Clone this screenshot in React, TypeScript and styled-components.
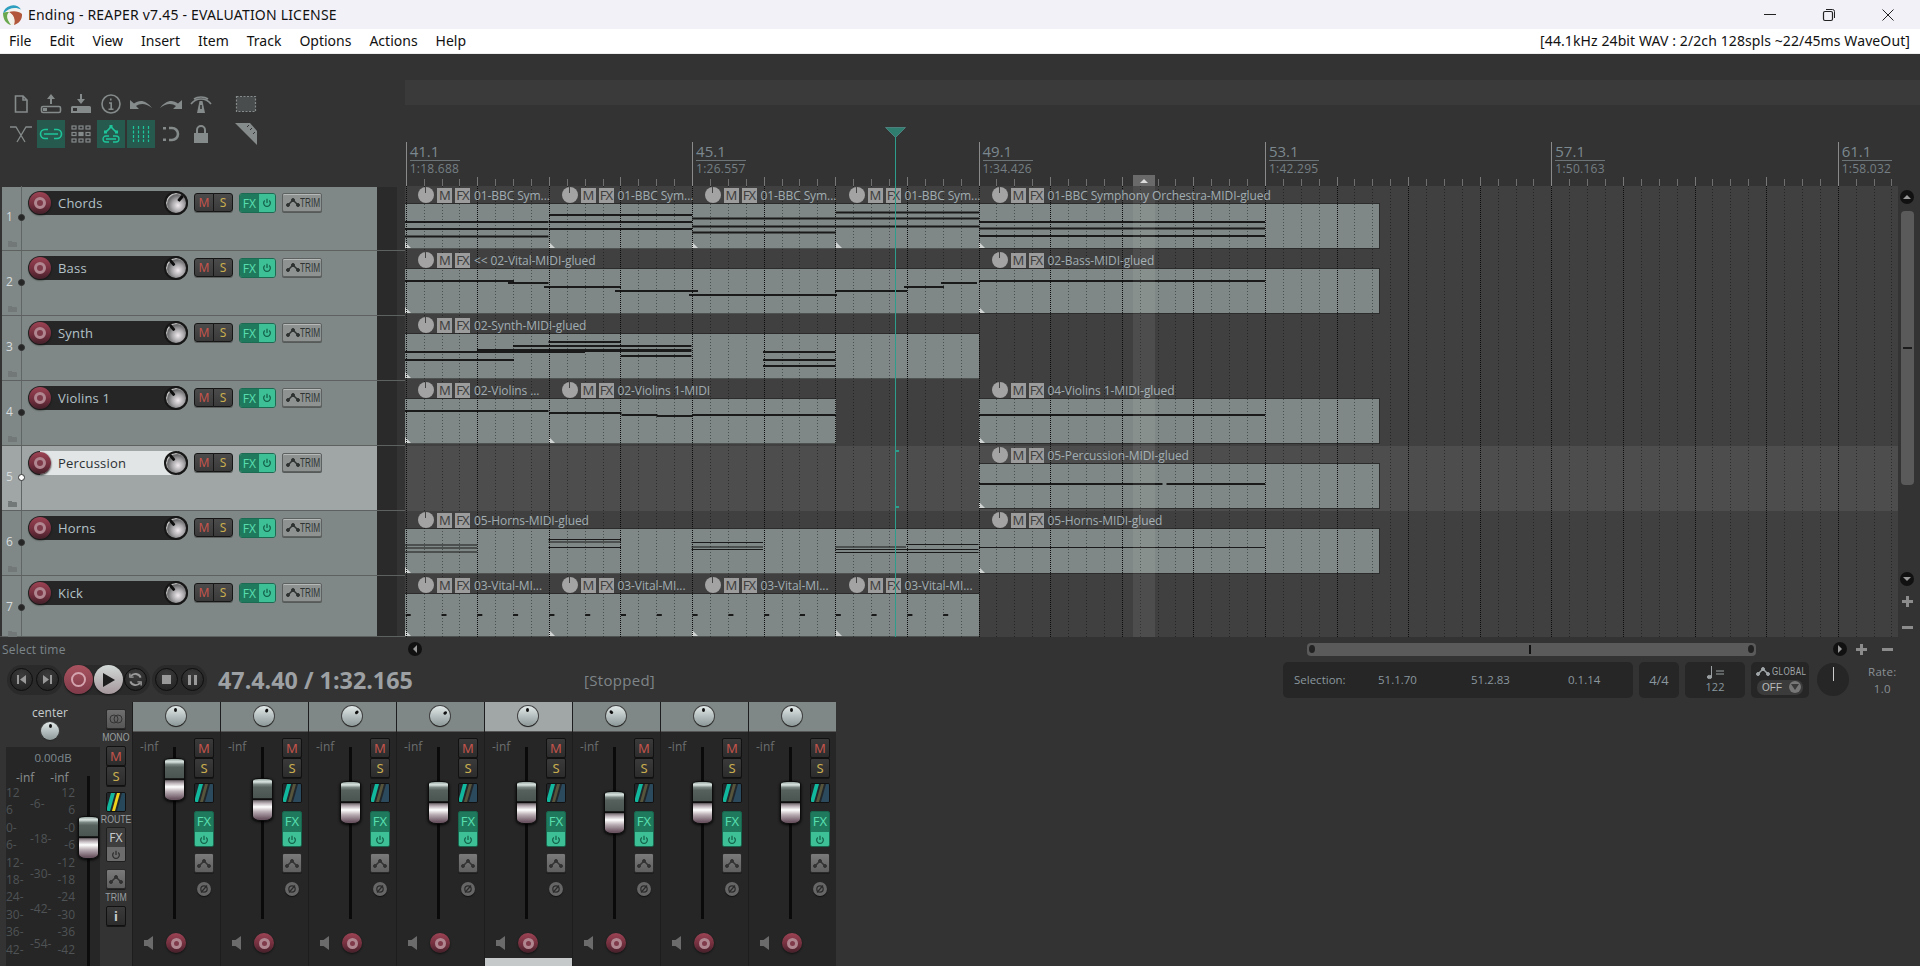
import React from 'react';
import styled, { createGlobalStyle } from 'styled-components';

const UI = `"Open Sans", "Noto Sans", "Liberation Sans", sans-serif`;
const Global = createGlobalStyle`
  html, body { margin: 0; padding: 0; background: #333; overflow: hidden; }
  * { box-sizing: border-box; }
`;

const Page = styled.div`
  width: 1920px; height: 966px; display: flex; flex-direction: column;
  background: #333; overflow: hidden; font-family: ${UI}; color: #9aa;
`;

/* ---------- window chrome ---------- */
const TitleBar = styled.div`
  height: 29px; flex: none; background: #f3f1f8; display: flex; align-items: center;
  padding-left: 2px; color: #111; font: 14px "Noto Sans", sans-serif;
`;
const TitleText = styled.span`margin-left: 5px; flex: 1; letter-spacing: 0.19px;`;
const WinBtn = styled.svg`width: 14px; height: 14px; margin-right: 45px; fill: none; stroke: #222; stroke-width: 1;
  &:last-child { margin-right: 25px; }`;
const MenuBar = styled.div`
  height: 25px; flex: none; background: #fff; border-bottom: 1px solid #eee; display: flex; align-items: center;
  padding: 0 10px 2px 9px; color: #111; font: 14px "Noto Sans", sans-serif; gap: 18px;
`;
const MenuInfo = styled.span`margin-left: auto; letter-spacing: 0.1px;`;

/* ---------- upper area ---------- */
const Upper = styled.div`height: 583px; flex: none; display: flex;`;
const LeftCol = styled.div`width: 405px; flex: none; display: flex; flex-direction: column;`;
const RightCol = styled.div`flex: 1; display: flex; flex-direction: column; min-width: 0;`;
const ToolArea = styled.div`
  height: 132px; flex: none; padding: 36px 0 0 7px; display: grid;
  grid-template-columns: repeat(7, 28px) 28px; grid-auto-rows: 28px; column-gap: 2px; row-gap: 2px;
`;
const ToolCell = styled.div<{ $on?: boolean; $far?: boolean }>`
  width: 28px; height: 28px; display: flex; align-items: center; justify-content: center;
  background: ${p => (p.$on ? '#265a4e' : 'transparent')};
  margin-left: ${p => (p.$far ? '15px' : '0')};
  color: ${p => (p.$on ? '#1fc59a' : '#858a8a')};
`;
const TI = styled.svg`width: 24px; height: 24px; fill: none; stroke: currentColor; stroke-width: 1.6;`;

const TrackList = styled.div`display: flex; flex-direction: column; flex: 1; min-height: 0; border-bottom: 1px solid #555;`;
const TrackRow = styled.div<{ $h: number; $sel?: boolean }>`
  height: ${p => p.$h}px; flex: none; display: flex; margin-left: 2px;
  background: linear-gradient(to right, ${p => (p.$sel ? '#9fa6a5' : '#7f8886')} 375px, #2a2a2a 375px, #2a2a2a 395px, #333 395px);
  border-bottom: 1px solid #5d6261;
  &:first-child { border-top: 1px solid #333; }
  &:first-child > * { margin-top: -1px; }
`;
const NumCol = styled.div`
  width: 20px; flex: none; position: relative; border-right: 1px solid #5f6665;
  padding: 23px 0 0 4px; font-size: 12px; line-height: 16px; color: #d8dcdc;
`;
const Dot = styled.i<{ $sel?: boolean }>`
  position: absolute; right: -4px; top: 28px; width: 7px; height: 7px; border-radius: 50%;
  background: ${p => (p.$sel ? '#fff' : '#262626')}; border: 1px solid #333;
`;
const Folder = styled.i`
  position: absolute; left: 6px; top: 56px; width: 9px; height: 5px; background: #717877; border-radius: 1px 1px 0 0;
  &::before { content: ''; position: absolute; left: 0; top: -1px; width: 4px; height: 1px; background: #717877; }
`;
const TrackCtl = styled.div`display: flex; align-items: flex-start; padding: 5px 0 0 6px; gap: 6px;`;
const NamePill = styled.div<{ $sel?: boolean }>`
  width: 160px; height: 24px; border-radius: 12px; display: flex; align-items: center; position: relative;
  background: ${p => (p.$sel ? 'linear-gradient(to right,#262626 12px,#e2e5e5 12px,#e2e5e5 150px,#262626 150px)' : '#262626')};
  color: ${p => (p.$sel ? '#2a2f33' : '#b4c2c8')}; font-size: 13px;
`;
const PillName = styled.span`margin-left: 30px; letter-spacing: 0.2px; position: relative; z-index: 1;`;
const RecOuter = styled.div<{ $d: number }>`
  width: ${p => p.$d}px; height: ${p => p.$d}px; border-radius: 50%; flex: none;
  background: linear-gradient(#9c4354, #6b2c3a 65%, #43202a);
  display: flex; align-items: center; justify-content: center; box-shadow: 0 1px 2px #111;
`;
const RecInner = styled.div<{ $d: number }>`
  width: ${p => p.$d}px; height: ${p => p.$d}px; border-radius: 50%; border: 3px solid #b08790; background: #7f3b4a;
`;
const TcpRec = styled.div`position: absolute; left: 1px; top: 1px;`;
const TcpKnob = styled.div`
  position: absolute; right: 0; top: 0; width: 24px; height: 24px; border-radius: 50%; border: 2px solid #171717;
  background: radial-gradient(circle at 60% 62%, #efeaed 0, #aaa8ab 34%, #636365 62%, #333 82%);
  box-shadow: inset 1px 1px 1px #cfcfcf;
`;
const KnobArm = styled.div`position: absolute; inset: 0;`;
const KnobTick = styled.i`display: block; width: 3px; height: 7px; background: #0e0e0e; margin: 0 auto; border-radius: 1px;`;
const MSGroup = styled.div`display: flex; margin-top: 2px;`;
const TcpMS = styled.div<{ $c: string }>`
  width: 20px; height: 19px; border: 1px solid #161616; background: linear-gradient(#4b4b4b, #3a3a3a);
  display: flex; align-items: center; justify-content: center; color: ${p => p.$c}; font: 12px "Noto Sans", sans-serif;
  box-shadow: 0 1px 0 #5a5f5e;
  &:first-child { border-radius: 3px 0 0 3px; } &:last-child { border-radius: 0 3px 3px 0; margin-left: -1px; }
`;
const FxGroup = styled.div`display: flex; margin-top: 2px; border-radius: 3px; overflow: hidden; border: 1px solid #1b6b52;`;
const FxL = styled.div`width: 19px; height: 18px; background: #1f7a5d; color: #57dcae; font: 12px "Noto Sans", sans-serif;
  display: flex; align-items: center; justify-content: center;`;
const FxR = styled.div`width: 16px; height: 18px; background: #3dc095; color: #14604a; display: flex; align-items: center; justify-content: center;`;
const TrimBtn = styled.div`
  width: 40px; height: 19px; margin-top: 2px; border: 1px solid #5d6261; border-radius: 2px; background: #8e9392;
  display: flex; align-items: center; padding-left: 3px; color: #2f3433; box-shadow: 0 1px 0 #565b5a, inset 0 1px 0 #b5b9b8;
`;
const TrimTxt = styled.span`display: inline-block; font: 12.5px "Liberation Sans", sans-serif; transform: scaleX(0.66); transform-origin: left; margin-left: 0;`;

/* ---------- ruler ---------- */
const RulerArea = styled.div`height: 132px; flex: none; position: relative;`;
const TopStrip = styled.div`position: absolute; left: 0; right: 0; top: 26px; height: 25px; background: #3a3a3a;`;
const RulerMark = styled.div`position: absolute; top: 89px; width: 58px; color: #7c888f;`;
const Bar = styled.div`font-size: 15px; line-height: 17px; border-bottom: 1px solid #6c7478; width: 50px; height: 18px;`;
const Secs = styled.div`font-size: 12px; line-height: 15px; color: #757f84; letter-spacing: 0.25px;`;
const SelTab = styled.div`position: absolute; left: 728px; top: 121px; width: 22px; height: 11px; background: #6a6a6a;
  display: flex; justify-content: center; align-items: center; &::after { content: ''; border: 4px solid transparent; border-bottom-color: #ddd; border-top: 0; }`;
const RulerTicks = styled.svg`position: absolute; left: 0; top: 0; width: 1515px; height: 132px;`;

/* ---------- arrange ---------- */
const ArrangeWrap = styled.div`flex: 1; display: flex; min-height: 0;`;
const Canvas = styled.div`width: 1493px; flex: none; position: relative; display: flex; flex-direction: column; overflow: hidden;`;
const LaneRow = styled.div<{ $h: number; $sel?: boolean }>`
  height: ${p => p.$h}px; flex: none; position: relative; background: ${p => (p.$sel ? '#4d4d4d' : '#404040')};
`;
const Clip = styled.div`position: absolute; top: 1px;`;
const ClipHead = styled.div`height: 16px; position: relative; display: flex; align-items: center; padding-left: 13px; z-index: 3; white-space: nowrap;`;
const ClipVol = styled.i`width: 16px; height: 16px; border-radius: 50%; background: #a3a3a3; position: relative; flex: none;
  &::after { content: ''; position: absolute; left: 7px; top: 0; width: 1px; height: 6px; background: #444; }`;
const ClipBox = styled.span`width: 15px; height: 15px; background: #9c9c9c; color: #3f3f3f; font: 13px "Noto Sans", sans-serif; margin-left: 3px;
  display: flex; align-items: center; justify-content: center; flex: none; letter-spacing: -1px;`;
const ClipLabel = styled.span`margin-left: 4px; font-size: 12px; line-height: 16px; color: #a1adb2; position: relative; top: 1px; letter-spacing: -0.09px;`;
const ClipBody = styled.div<{ $end?: boolean; $h: number }>`
  height: ${p => p.$h}px; position: relative; background: #7f8886; border-top: 1px solid #2c2c2c; border-bottom: 1px solid #4e5352;
  ${p => (p.$end ? 'border-right: 1px solid #2c2c2c; border-bottom-color:#2c2c2c;' : '')}
  &::after { content: ''; position: absolute; left: 0; bottom: 0; border-left: 6px solid #cfd4d3; border-top: 6px solid transparent; }
`;
const Notes = styled.svg`position: absolute; left: 0; top: 0; width: 100%; height: 100%; display: block; fill: #1a1a1a;`;
const GridLines = styled.svg`position: absolute; left: 0; top: 0; width: 1493px; height: 451px; z-index: 2; pointer-events: none;`;
const SelBand = styled.div`position: absolute; left: 728px; top: 0; bottom: 0; width: 22px; background: rgba(255,255,255,0.07); z-index: 4;`;
const Playhead = styled.div`position: absolute; left: 490px; top: 0; bottom: 0; width: 1px; background: #2f9d8b; z-index: 5;`;
const PlayTop = styled.svg`position: absolute; left: 480px; top: 73px; width: 21px; height: 59px;`;
const EditMark = styled.div`position: absolute; left: 490px; top: 4px; width: 4px; height: 58px; border: solid #2f9d8b; border-width: 2px 0 2px 1px; z-index: 5;`;

const VScroll = styled.div`flex: 1; display: flex; flex-direction: column; align-items: center; padding: 0 4px 0 0;`;
const RoundBtn = styled.div<{ $s?: number }>`
  width: ${p => p.$s || 14}px; height: ${p => p.$s || 14}px; border-radius: 50%; background: #111; flex: none;
  display: flex; align-items: center; justify-content: center;
`;
const Tri = styled.i<{ $dir: 'u' | 'd' | 'l' | 'r' }>`
  width: 0; height: 0; border: 4px solid transparent;
  ${p => p.$dir === 'u' ? 'border-bottom-color:#999;border-top:0;' : p.$dir === 'd' ? 'border-top-color:#999;border-bottom:0;' : p.$dir === 'l' ? 'border-right-color:#999;border-left:0;' : 'border-left-color:#999;border-right:0;'}
`;
const VThumb = styled.div`width: 13px; height: 274px; background: #5a5a5a; border-radius: 4px; display: flex; align-items: center; justify-content: center; margin-top: 7px;
  &::after { content: ''; width: 9px; height: 2px; background: #1c1c1c; }`;
const PlusIcon = styled.i`width: 11px; height: 11px; display: block; flex: none;
  background: linear-gradient(#8c8c8c,#8c8c8c) center/11px 3px no-repeat, linear-gradient(#8c8c8c,#8c8c8c) center/3px 11px no-repeat;`;
const MinusIcon = styled.i`width: 11px; height: 3px; display: block; flex: none; background: #8c8c8c;`;

/* ---------- status row ---------- */
const StatusRow = styled.div`height: 24px; flex: none; display: flex; align-items: center; position: relative;`;
const StatusText = styled.span`width: 408px; padding-left: 2px; font-size: 12px; color: #7c858a; letter-spacing: 0.2px; flex: none;`;
const HThumb = styled.div`width: 449px; height: 13px; margin-left: 885px; flex: none; background: #5a5a5a; border-radius: 4px; display: flex; align-items: center; justify-content: space-between; padding: 0 2px; position: relative;`;
const HDot = styled.i`width: 6px; height: 8px; background: #222; border-radius: 50%;`;
const HMid = styled.i`width: 2px; height: 9px; background: #111; position: absolute; left: 222px;`;

/* ---------- transport row ---------- */
const TransRow = styled.div`height: 41px; flex: none; display: flex; align-items: center; padding: 0 0 4px 7px;`;
const TPill = styled.div`display: flex; align-items: center; height: 30px; padding: 0 3px; gap: 3px; background: #2a2a2a; border-radius: 15px; margin-right: 2px;`;
const TPillTight = styled(TPill)`padding: 0 3px 0 0;`;
const TBtn = styled.div`width: 23px; height: 23px; border-radius: 50%; background: radial-gradient(circle at 50% 30%, #3c3c3c, #1f1f1f); border: 1px solid #0e0e0e;
  display: flex; align-items: center; justify-content: center; color: #9a9a9a; flex: none;`;
const TRec = styled.div`width: 29px; height: 29px; border-radius: 50%; background: linear-gradient(#a9535f, #7f3a49); display: flex; align-items: center; justify-content: center; flex: none; box-shadow: 0 1px 2px #111;`;
const TRecRing = styled.i`width: 15px; height: 15px; border-radius: 50%; border: 2px solid #d3a3ae;`;
const TPlay = styled.div`width: 29px; height: 29px; margin: 0 -2px; border-radius: 50%; background: linear-gradient(#d2dad7, #a5979c); display: flex; align-items: center; justify-content: center; flex: none; color: #1d1d1d; box-shadow: 0 1px 2px #111; position: relative; z-index: 1;`;
const TimeText = styled.div`margin-left: 9px; width: 366px; flex: none; font: 700 23.3px/28px "Open Sans", sans-serif; color: #9da1a4; white-space: nowrap;`;
const Stopped = styled.div`font-size: 15px; color: #7f8588; width: 699px; flex: none; letter-spacing: 0.3px;`;
const InfoPanel = styled.div<{ $w: number }>`
  width: ${p => p.$w}px; height: 36px; background: #262626; border-radius: 5px; flex: none; margin-right: 6px;
  display: flex; align-items: center; justify-content: center; color: #8a979e; font-size: 11.5px; position: relative;
`;
const SigPanel = styled(InfoPanel)`font-size: 13px;`;
const SelVal = styled.span<{ $w: number }>`width: ${p => p.$w}px; flex: none;`;
const Stack = styled.div`display: flex; flex-direction: column; align-items: center; line-height: 14px;`;
const TempoTxt = styled.span`font-size: 11px;`;
const GlobalRow = styled.div`color: #a0a5a7; display: flex; align-items: center; height: 14px; width: 48px;`;
const GlobalTxt = styled.span`display: inline-block; font: 10px "Liberation Sans", sans-serif; transform: scaleX(0.8); transform-origin: left; color: #a0a5a7; margin-left: 2px; width: 28px; letter-spacing: 0.5px;`;
const OffPill = styled.div`width: 46px; height: 15px; background: #3b3b3b; border-radius: 7px; display: flex; align-items: center; justify-content: space-between; padding: 0 2px 0 5px; font: 10px "Liberation Sans", sans-serif; color: #bbb; margin-top: 1px;`;
const OffDot = styled.i`width: 12px; height: 12px; border-radius: 50%; background: #777; display: flex; align-items: center; justify-content: center;
  &::after { content: ''; border: solid transparent; border-width: 6px 4px 0; border-top-color: #3a3a3a; }`;
const RateKnob = styled.div`width: 32px; height: 33px; border-radius: 50%; background: #262626; flex: none; margin: 0 19px 0 2px; display: flex; justify-content: center;
  &::after { content: ''; width: 1px; height: 14px; background: #ccc; margin-top: 4px; }`;
const RateBox = styled.div`display: flex; flex-direction: column; align-items: center; font-size: 11.5px; line-height: 17px; color: #8a9095; letter-spacing: 0.3px;`;

/* ---------- mixer ---------- */
const MixerRow = styled.div`flex: 1; display: flex; min-height: 0; overflow: hidden;`;
const Master = styled.div`width: 132px; flex: none; display: flex;`;
const MasterLeft = styled.div`width: 106px; flex: none; display: flex; flex-direction: column; align-items: flex-start; padding-left: 6px;`;
const CenterTxt = styled.div`width: 88px; text-align: center; font-size: 12px; line-height: 16px; color: #c6cbcd; margin-top: 3px;`;
const SmallKnob = styled.div<{ $d: number }>`
  width: ${p => p.$d}px; height: ${p => p.$d}px; border-radius: 50%; position: relative; flex: none;
  background: linear-gradient(#e2e9e9, #8c9797); box-shadow: 0 1px 1px #222, 0 0 0 1px #444;
`;
const PanTick = styled.i`position: absolute; inset: 1px; display: flex; justify-content: center;
  &::after { content: ''; width: 3px; height: 4px; background: #111; border-radius: 50%; margin-top: 1px; }`;
const MasterKnobWrap = styled.div`width: 88px; display: flex; justify-content: center; margin-top: 1px;`;
const MeterPanel = styled.div`width: 94px; flex: 1; margin-top: 7px; background: #262626; position: relative; padding-top: 2px;`;
const MeterDb = styled.div`text-align: center; font-size: 11.5px; line-height: 16px; color: #7e8a90; margin-top: 1px;`;
const MeterInf = styled.div`display: flex; gap: 16px; padding-left: 10px; font-size: 12px; line-height: 16px; color: #8a8f91; margin-top: 4px;`;
const ScaleWrap = styled.div`display: flex; font-size: 12px; color: #4f5355; margin-top: -2px;`;
const ScaleCol = styled.div<{ $w: number; $lh: number; $pt?: number; $right?: boolean }>`
  width: ${p => p.$w}px; line-height: ${p => p.$lh}px; padding-top: ${p => p.$pt || 0}px; flex: none;
  text-align: ${p => (p.$right ? 'right' : 'left')}; color: #4f5355; white-space: pre;
`;
const MTrack = styled.i`position: absolute; left: 81px; top: 29px; bottom: 0; width: 3px; background: #0c0c0c;`;
const MasterBtns = styled.div`width: 20px; flex: none; display: flex; flex-direction: column; align-items: center; padding-top: 7px;`;
const BtnLabel = styled.div`font: 11.5px/12px "Liberation Sans", sans-serif; color: #9a9fa1; transform: scaleX(0.76); margin: 2px 0 3px; white-space: nowrap;`;
const RouteLabel = styled(BtnLabel)`margin: 1px 0 2px;`;
const MBtn = styled.div<{ $c: string; $bold?: boolean }>`
  width: 20px; height: 20px; flex: none; background: linear-gradient(#3a3a3a, #2c2c2c); border: 1px solid #111; border-radius: 2px; color: ${p => p.$c};
  display: flex; align-items: center; justify-content: center; font: ${p => (p.$bold ? 700 : 400)} 13px "Noto Sans", sans-serif; box-shadow: 0 1px 0 #161616;
`;
const GreyBtn = styled.div`width: 20px; height: 20px; flex: none; background: linear-gradient(#7a7a7a, #5f5f5f); border: 1px solid #2a2a2a; border-radius: 2px; color: #333; display: flex; align-items: center; justify-content: center; box-shadow: 0 1px 0 #1c1c1c;`;
const MonoBtn = styled(GreyBtn)`background: linear-gradient(#6f6f6f, #565656);`;
const RouteBox = styled.svg`width: 20px; height: 20px; flex: none; display: block; border: 1px solid #111; border-radius: 2px;`;
const MFxOff = styled.div`width: 20px; height: 35px; flex: none; border: 1px solid #1f1f1f; border-radius: 2px; overflow: hidden;`;
const MFxTop = styled.div`height: 19px; background: #3e3e3e; color: #c5c9cb; font: 12px/19px "Noto Sans", sans-serif; text-align: center;`;
const MFxBot = styled.div`height: 15px; background: #6c6c6c; color: #2e2e2e; display: flex; align-items: center; justify-content: center;`;
const MFxOn = styled.div`width: 20px; height: 36px; flex: none; border: 1px solid #17654d; border-radius: 2px; overflow: hidden;`;
const FxTop = styled.div`height: 20px; background: #1f7a5d; color: #57dcae; font: 13px/19px "Noto Sans", sans-serif; text-align: center;`;
const FxBot = styled.div`height: 15px; background: #3dc095; color: #14604a; display: flex; align-items: center; justify-content: center;`;
const Strip = styled.div`width: 88px; flex: none; display: flex; flex-direction: column; background: #262626; border-left: 1px solid #1d1d1d;`;
const StripHead = styled.div<{ $sel?: boolean }>`
  height: 30px; flex: none; background: ${p => (p.$sel ? '#a0a7a6' : '#7f8886')}; border-bottom: 1px solid #555;
  display: flex; justify-content: center; padding: 4px 2px 0 0;
`;
const StripBody = styled.div`display: flex; height: 226px; flex: none;`;
const FaderCol = styled.div`width: 61px; flex: none; position: relative; display: flex; flex-direction: column;`;
const InfLabel = styled.div`position: absolute; left: 7px; top: 7px; font-size: 12px; line-height: 16px; color: #6c6f70;`;
const FaderTrack = styled.i`position: absolute; left: 40px; top: 15px; width: 3px; height: 172px; background: #0a0a0a;`;
const FaderCap = styled.div`
  position: absolute; left: 31px; width: 21px; height: 43px; border-radius: 7px 7px 8px 8px / 3px 3px 5px 5px;
  border: 1px solid #0d0d0d; box-shadow: 0 1px 3px #000;
  background: linear-gradient(#9aa8a3 0, #dbe6e2 7%, #7c8884 13%, #56615e 20%, #4a5552 46%, #0f0f0f 48%, #0f0f0f 50%, #7f767c 53%, #c4bcc1 60%, #ffffff 68%, #b7abb1 80%, #6b5562 97%);
`;
const MasterCap = styled(FaderCap)`left: 72px; top: 69px;`;
const BottomRow = styled.div`margin-top: auto; display: flex; align-items: center; padding: 0 0 5px 11px; gap: 13px;`;
const Speaker = styled.svg`width: 9px; height: 14px; fill: #6b6b6b; flex: none;`;
const BtnCol = styled.div`width: 20px; flex: none; display: flex; flex-direction: column; align-items: center; padding-top: 6px;`;
const Phase = styled.div`width: 14px; height: 14px; border-radius: 50%; background: #666; display: flex; align-items: center; justify-content: center; margin-top: 9px; box-shadow: 0 1px 1px #111; flex: none;`;
const NameBox = styled.div<{ $sel?: boolean }>`
  height: 8px; flex: 1; overflow: hidden; text-align: center; font-size: 13px; line-height: 18px; padding-top: 6px;
  background: ${p => (p.$sel ? '#c5c9c9' : '#262626')}; color: #c9cdcf;
`;
const Gap = styled.div<{ $h: number }>`height: ${p => p.$h}px; flex: none;`;
const HGap = styled.div<{ $w: number }>`width: ${p => p.$w}px; flex: none;`;

/* ---------- drawings ---------- */
const Power = ({ s = 10 }: { s?: number }) => (
  <svg width={s} height={s} viewBox="0 0 12 12" fill="none" stroke="currentColor" strokeWidth="1.5">
    <path d="M6 1v5M3.4 3a4 4 0 1 0 5.2 0" />
  </svg>
);
const Env = ({ w = 14, h = 9 }: { w?: number; h?: number }) => (
  <svg width={w} height={h} viewBox="0 0 14 9" fill="currentColor" stroke="currentColor" style={{ flex: 'none' }}>
    <path d="M2 7l5-5 5 5" fill="none" strokeWidth="1.5" />
    <circle cx="2" cy="7" r="1.5" /><circle cx="7" cy="2" r="1.5" /><circle cx="12" cy="7" r="1.5" />
  </svg>
);
const Logo = () => (
  <svg width="21" height="22" viewBox="0 0 21 22">
    <circle cx="10.5" cy="11" r="10" fill="#f2f2ee" />
    <path d="M1 10a10 10 0 0 1 18-4.5C14 2.500 6 3.500 1 10z" fill="#2e9fc0" />
    <path d="M1 9C1 15 4 20 9 21 4.500 15 4 11 7 8 4 8 2 8.500 1 9z" fill="#6aa84f" />
    <path d="M7 8c4-1.500 10-1 13 2 .5 5-3 10-8.500 11C14 16 12 11 7 8z" fill="#b2573c" />
    <path d="M9.500 21C11 17 10 12 7 8c4 3 6.500 8 5 13z" fill="#f3f0e8" />
  </svg>
);
const toolIcons: Record<string, React.ReactNode> = {
  new: <path d="M6.500 4h7.500l4 4v12H6.500zM14 4v4h4" />,
  up: <><path d="M12 2l4 5h-3v5h-2V7H8z" fill="currentColor" stroke="none" /><rect x="2.500" y="14.500" width="19" height="6" rx="1.500" /><rect x="4" y="16" width="4" height="3" fill="currentColor" stroke="none" /></>,
  down: <><path d="M12 12l-4-5h3V2h2v5h3z" fill="currentColor" stroke="none" /><path d="M3.500 14h17a1.500 1.500 0 0 1 1.500 1.500V21H2v-5.500A1.500 1.500 0 0 1 3.500 14zM4 16v3h4v-3z" fill="currentColor" fillRule="evenodd" stroke="none" /></>,
  info: <><circle cx="12" cy="12" r="9" /><path d="M11.800 6.500v2M10 11h2.200v6M9.500 17.300h5" /></>,
  undo: <path d="M1 8v9h9l-3-3c4-3 10-3 16 2C18 9 11 6.500 5 11.500z" fill="currentColor" stroke="none" />,
  redo: <path d="M23 8v9h-9l3-3c-4-3-10-3-16 2C6 9 13 6.500 19 11.500z" fill="currentColor" stroke="none" />,
  road: <><path d="M2 12c3-4 6-5 10-5s7 1 10 5M5 7c2-1.500 4-2 7-2s5 .5 7 2" /><path d="M8 21l2.500-12h3L16 21z" fill="currentColor" stroke="none" /><path d="M12 13v4" stroke="#333" /></>,
  rect: <rect x="2.500" y="4.500" width="19" height="15" fill="#4a4d4d" strokeDasharray="2 1.500" strokeWidth="1.200" />,
  xfade: <path d="M1 5h6l9 15M23 5h-6L8 20" strokeWidth="1.300" />,
  link: <path d="M9 7.500H6a4.500 4.500 0 0 0 0 9h3M15 7.500h3a4.500 4.500 0 0 1 0 9h-3M5 12h14" />,
  grid: <g strokeWidth="1.200"><rect x="3" y="4" width="4" height="3" /><rect x="10" y="4" width="4" height="3" /><rect x="17" y="4" width="4" height="3" /><rect x="3" y="10.500" width="4" height="3" /><rect x="10" y="10.500" width="4" height="3" fill="currentColor" /><rect x="17" y="10.500" width="4" height="3" /><rect x="3" y="17" width="4" height="3" /><rect x="10" y="17" width="4" height="3" /><rect x="17" y="17" width="4" height="3" /></g>,
  group: <><path d="M7 10l5-5 5 5" /><rect x="5" y="8.500" width="3" height="3" fill="currentColor" stroke="none" /><rect x="10.500" y="3" width="3" height="3" fill="currentColor" stroke="none" /><rect x="16" y="8.500" width="3" height="3" fill="currentColor" stroke="none" /><path d="M10 14H7a3 3 0 0 0 0 6h3M14 14h3a3 3 0 0 1 0 6h-3M7 17h10" strokeWidth="1.300" /></>,
  lines: <path d="M4.500 4v16M9.500 4v16M14.500 4v16M19.500 4v16" strokeDasharray="3 1.500" strokeWidth="1.200" />,
  snap: <><path d="M10 6h3a6 6 0 0 1 0 12h-3" strokeWidth="2.600" /><rect x="4" y="5" width="3" height="2.500" fill="currentColor" stroke="none" /><rect x="4" y="16.500" width="3" height="2.500" fill="currentColor" stroke="none" /></>,
  lock: <><path d="M8 12V8a4 4 0 0 1 8 0v4" strokeWidth="2" /><rect x="5" y="11" width="14" height="10" fill="currentColor" stroke="none" /></>,
  ruler: <><path d="M1 1h15l7 8v14z" fill="currentColor" stroke="none" /><path d="M15 3l-2 2M18 6l-2 2M21 10l-2 2" stroke="#333" strokeWidth="1" /></>,
};
const toolOrder: { k: string; on?: boolean; far?: boolean }[] = [
  { k: 'new' }, { k: 'up' }, { k: 'down' }, { k: 'info' }, { k: 'undo' }, { k: 'redo' }, { k: 'road' }, { k: 'rect', far: true },
  { k: 'xfade' }, { k: 'link', on: true }, { k: 'grid' }, { k: 'group', on: true }, { k: 'lines', on: true }, { k: 'snap' }, { k: 'lock' }, { k: 'ruler', far: true },
];

/* ---------- data ---------- */
type Note = [number, number, number, number?];
type ClipT = { x: number; w: number; label: string; notes?: Note[]; end?: boolean };
const BEAT = 17.9;
const kick = (x: number): Note[] => [0, 1, 2, 3].map(i => [x + i * 35.8, x + i * 35.8 + 5, 614, 2] as Note);
const lanes: ClipT[][] = [
  [
    { x: 405, w: 143.5, label: '01-BBC Sym...', notes: [[405, 548.5, 221], [405, 548.5, 228], [405, 548.5, 235.5]] },
    { x: 548.5, w: 143, label: '01-BBC Sym...', notes: [[548.5, 692, 214], [548.5, 692, 221], [548.5, 692, 228]] },
    { x: 691.5, w: 144, label: '01-BBC Sym...', notes: [[691.5, 835.5, 217.5], [691.5, 835.5, 225.5], [691.5, 835.5, 231.5]] },
    { x: 835.5, w: 143, label: '01-BBC Sym...', notes: [[835.5, 978.5, 211.5], [835.5, 978.5, 217.5], [835.5, 978.5, 225.5]] },
    { x: 978.5, w: 401, label: '01-BBC Symphony Orchestra-MIDI-glued', end: true, notes: [[978.5, 1264.5, 221], [978.5, 1264.5, 227.5], [978.5, 1264.5, 235]] },
  ],
  [
    { x: 405, w: 573.5, label: '<< 02-Vital-MIDI-glued', notes: [[405, 514, 280], [508, 548.5, 282], [544, 621, 286], [615, 698, 290], [689, 837, 294], [835, 907, 290], [904, 944, 286], [941, 977, 282]] },
    { x: 978.5, w: 401, label: '02-Bass-MIDI-glued', end: true, notes: [[978.5, 1264.5, 280]] },
  ],
  [
    { x: 405, w: 573.5, label: '02-Synth-MIDI-glued', notes: [[405, 585, 351], [405, 514, 359], [477, 691.5, 349, 3], [513, 691.5, 345], [548.5, 621, 341], [621, 691.5, 355], [763, 835.5, 351], [763, 835.5, 359], [763, 835.5, 365]] },
  ],
  [
    { x: 405, w: 143.5, label: '02-Violins ...', notes: [[405, 548.5, 410]] },
    { x: 548.5, w: 287, label: '02-Violins 1-MIDI', notes: [[548.5, 621, 412], [621, 657, 414], [656, 691.5, 415], [691.5, 835.5, 414]] },
    { x: 978.5, w: 401, label: '04-Violins 1-MIDI-glued', end: true, notes: [[978.5, 1264.5, 414]] },
  ],
  [
    { x: 978.5, w: 401, label: '05-Percussion-MIDI-glued', end: true, notes: [[978.5, 1162, 483], [1166, 1264.5, 483]] },
  ],
  [
    { x: 405, w: 573.5, label: '05-Horns-MIDI-glued', notes: [[405, 477, 544.5, 1], [405, 477, 547.5, 1], [405, 477, 551.5, 1], [548.5, 621, 539, 1], [548.5, 621, 541.5, 1], [548.5, 621, 547, 1], [691.5, 763, 542, 1], [691.5, 763, 546.5, 1], [691.5, 763, 549, 1], [835.5, 906, 546.5, 1], [835.5, 906, 549, 1], [835.5, 978.5, 552, 1], [906, 978.5, 544, 1], [906, 978.5, 549, 1]] },
    { x: 978.5, w: 401, label: '05-Horns-MIDI-glued', end: true, notes: [[978.5, 1264.5, 547, 1]] },
  ],
  [
    { x: 405, w: 143.5, label: '03-Vital-MI...', notes: kick(405.7) },
    { x: 548.5, w: 143, label: '03-Vital-MI...', notes: kick(548.9) },
    { x: 691.5, w: 144, label: '03-Vital-MI...', notes: kick(692.1) },
    { x: 835.5, w: 143, label: '03-Vital-MI...', notes: kick(835.3) },
  ],
];
const laneH = [65, 65, 65, 65, 65, 65, 61];
const laneTop = [186, 251, 316, 381, 446, 511, 576];
const tracks = ['Chords', 'Bass', 'Synth', 'Violins 1', 'Percussion', 'Horns', 'Kick'];
const trackKnob = [40, -40, -40, -40, -40, -40, -40];
const marks = [
  ['41.1', '1:18.688'], ['45.1', '1:26.557'], ['49.1', '1:34.426'], ['53.1', '1:42.295'], ['57.1', '1:50.163'], ['61.1', '1:58.032'],
];
const strips = [
  { pan: 0, top: 26, name: 'Chords' }, { pan: 22, top: 46, name: 'Bass' }, { pan: 48, top: 49, name: 'Synth' }, { pan: 55, top: 49, name: 'Violins 1' },
  { pan: 0, top: 49, name: 'Percussion', sel: true }, { pan: -55, top: 59, name: 'Horns' }, { pan: 0, top: 49, name: 'Kick' }, { pan: 0, top: 49, name: '' },
];

const RouteIcon = ({ a, b, c }: { a: string; b: string; c: string }) => (
  <RouteBox viewBox="0 0 18 18">
    <rect width="18" height="18" fill="#20262a" />
    <path d="M-1 18L4 0h4L3 18z" fill={a} /><path d="M5 18L10 0h3L8 18z" fill={b} /><path d="M10 18L15 0h3v18z" fill={c} />
  </RouteBox>
);
const PhaseIcon = () => (
  <svg width="10" height="10" viewBox="0 0 10 10" fill="none" stroke="#2b2b2b" strokeWidth="1.2"><circle cx="5" cy="5" r="3.2" /><path d="M2 8.500L8 1.500" /></svg>
);

const App = () => {
  const beats = Array.from({ length: 84 }, (_, i) => i);
  return (
    <Page>
      <Global />
      <TitleBar>
        <Logo />
        <TitleText>Ending - REAPER v7.45 - EVALUATION LICENSE</TitleText>
        <WinBtn viewBox="0 0 14 14"><path d="M1 6.500h12" /></WinBtn>
        <WinBtn viewBox="0 0 14 14"><rect x="1.500" y="3.500" width="9" height="9" rx="1.500" strokeWidth="1.200" /><path d="M4 1.500h6.500a2 2 0 0 1 2 2V10" /></WinBtn>
        <WinBtn viewBox="0 0 14 14"><path d="M1.500 1.500l11 11M12.500 1.500l-11 11" /></WinBtn>
      </TitleBar>
      <MenuBar>
        {['File', 'Edit', 'View', 'Insert', 'Item', 'Track', 'Options', 'Actions', 'Help'].map(m => <span key={m}>{m}</span>)}
        <MenuInfo>[44.1kHz 24bit WAV : 2/2ch 128spls ~22/45ms WaveOut]</MenuInfo>
      </MenuBar>

      <Upper>
        <LeftCol>
          <ToolArea>
            {toolOrder.map(t => (
              <ToolCell key={t.k} $on={t.on} $far={t.far}><TI viewBox="0 0 24 24">{toolIcons[t.k]}</TI></ToolCell>
            ))}
          </ToolArea>
          <TrackList>
            {tracks.map((t, i) => {
              const sel = i === 4;
              return (
                <TrackRow key={t} $h={laneH[i]} $sel={sel}>
                  <NumCol>{i + 1}<Dot $sel={sel} /><Folder /></NumCol>
                  <TrackCtl>
                    <NamePill $sel={sel}>
                      <TcpRec><RecOuter $d={22}><RecInner $d={12} /></RecOuter></TcpRec>
                      <PillName>{t}</PillName>
                      <TcpKnob><KnobArm style={{ transform: `rotate(${trackKnob[i]}deg)` }}><KnobTick /></KnobArm></TcpKnob>
                    </NamePill>
                    <MSGroup><TcpMS $c="#c4544c">M</TcpMS><TcpMS $c="#c9ad4f">S</TcpMS></MSGroup>
                    <FxGroup><FxL>FX</FxL><FxR><Power /></FxR></FxGroup>
                    <TrimBtn><Env /><TrimTxt>TRIM</TrimTxt></TrimBtn>
                  </TrackCtl>
                </TrackRow>
              );
            })}
          </TrackList>
        </LeftCol>

        <RightCol>
          <RulerArea>
            <TopStrip />
            <RulerTicks>
              <g strokeWidth="1">
                {beats.map(i => {
                  const x = Math.round(0.7 + i * BEAT) + 0.5;
                  const y1 = i % 16 === 0 ? 88 : i % 4 === 0 ? 123 : 125;
                  return <line key={i} x1={x} x2={x} y1={y1} y2={132} stroke={i % 16 === 0 ? '#8a8a8a' : i % 4 === 0 ? '#777' : '#6e6e6e'} />;
                })}
              </g>
            </RulerTicks>
            {marks.map((m, i) => (
              <RulerMark key={m[0]} style={{ left: 4.7 + i * 286.4 }}><Bar>{m[0]}</Bar><Secs>{m[1]}</Secs></RulerMark>
            ))}
            <SelTab />
            <PlayTop viewBox="0 0 21 59">
              <path d="M0.500 0.500h20L10.500 10.500z" fill="#2e7d6e" stroke="#6aa" strokeWidth="0.500" />
              <path d="M10.500 10v49" stroke="#2f9d8b" />
            </PlayTop>
          </RulerArea>
          <ArrangeWrap>
            <Canvas>
              {lanes.map((clips, i) => (
                <LaneRow key={i} $h={laneH[i]} $sel={i === 4}>
                  {clips.map((c, j) => (
                    <Clip key={j} style={{ left: c.x - 405, width: c.w }}>
                      <ClipHead>
                        <ClipVol /><ClipBox>M</ClipBox><ClipBox>FX</ClipBox>
                        <ClipLabel>{c.label}</ClipLabel>
                      </ClipHead>
                      <ClipBody $end={c.end} $h={i === 6 ? 44 : 46}>
                        <Notes>
                          {(c.notes || []).map((n, k) => (
                            <rect key={k} x={n[0] - c.x} y={n[2] - laneTop[i] - 18} width={n[1] - n[0]} height={n[3] || 2} />
                          ))}
                        </Notes>
                      </ClipBody>
                    </Clip>
                  ))}
                  {i === 4 && <EditMark />}
                </LaneRow>
              ))}
              <GridLines>
                {beats.map(i => {
                  const x = Math.round(0.7 + i * BEAT) + 0.5;
                  const strong = i % 4 === 0;
                  return <line key={i} x1={x} x2={x} y1={0} y2={451} stroke={strong ? '#0d0d0d' : 'rgba(0,0,0,0.42)'} strokeDasharray={strong ? '1 1' : '1 2'} />;
                })}
              </GridLines>
              <SelBand />
              <Playhead />
            </Canvas>
            <VScroll>
              <Gap $h={4} />
              <RoundBtn><Tri $dir="u" /></RoundBtn>
              <VThumb />
              <Gap $h={87} />
              <RoundBtn><Tri $dir="d" /></RoundBtn>
              <Gap $h={10} />
              <PlusIcon />
              <Gap $h={19} />
              <MinusIcon />
            </VScroll>
          </ArrangeWrap>
        </RightCol>
      </Upper>

      <StatusRow>
        <StatusText>Select time</StatusText>
        <RoundBtn><Tri $dir="l" /></RoundBtn>
        <HThumb><HDot /><HMid /><HDot /></HThumb>
        <HGap $w={77} />
        <RoundBtn><Tri $dir="r" /></RoundBtn>
        <HGap $w={9} />
        <PlusIcon />
        <HGap $w={15} />
        <MinusIcon />
      </StatusRow>

      <TransRow>
        <TPill>
          <TBtn><svg width="11" height="11" viewBox="0 0 11 11" fill="#999"><path d="M1 1h2v9H1zM10 1v9L4 5.500z" /></svg></TBtn>
          <TBtn><svg width="11" height="11" viewBox="0 0 11 11" fill="#999"><path d="M10 1H8v9h2zM1 1v9l6-4.500z" /></svg></TBtn>
        </TPill>
        <TPillTight>
          <TRec><TRecRing /></TRec>
          <TPlay><svg width="13" height="14" viewBox="0 0 13 14" fill="currentColor"><path d="M1 0l12 7-12 7z" /></svg></TPlay>
          <TBtn><svg width="15" height="15" viewBox="0 0 16 16" fill="none" stroke="#9a9a9a" strokeWidth="2"><path d="M13.500 6A6 6 0 0 0 3 4.500M2.500 10A6 6 0 0 0 13 11.500" /><path d="M2 1.500v4h4M14 14.500v-4h-4" strokeWidth="1.500" /></svg></TBtn>
        </TPillTight>
        <TPill>
          <TBtn><svg width="9" height="9" viewBox="0 0 9 9" fill="#999"><rect width="9" height="9" /></svg></TBtn>
          <TBtn><svg width="9" height="10" viewBox="0 0 9 10" fill="#999"><path d="M0 0h3v10H0zM6 0h3v10H6z" /></svg></TBtn>
        </TPill>
        <TimeText>47.4.40 / 1:32.165</TimeText>
        <Stopped>[Stopped]</Stopped>
        <InfoPanel $w={350}>
          <SelVal $w={84}>Selection:</SelVal><SelVal $w={93}>51.1.70</SelVal><SelVal $w={97}>51.2.83</SelVal><SelVal $w={54}>0.1.14</SelVal>
        </InfoPanel>
        <SigPanel $w={40}>4/4</SigPanel>
        <InfoPanel $w={60}>
          <Stack>
            <svg width="20" height="15" viewBox="0 0 20 15" fill="none" stroke="#9a9fa1"><path d="M6.500 1v11" /><ellipse cx="4.500" cy="12" rx="2.200" ry="1.600" fill="#9a9fa1" /><path d="M11 6h8M11 9h8" strokeWidth="1.200" /></svg>
            <TempoTxt>122</TempoTxt>
          </Stack>
        </InfoPanel>
        <InfoPanel $w={58}>
          <Stack>
            <GlobalRow><Env w={14} h={9} /><GlobalTxt>GLOBAL</GlobalTxt></GlobalRow>
            <OffPill>OFF<OffDot /></OffPill>
          </Stack>
        </InfoPanel>
        <RateKnob />
        <RateBox><span>Rate:</span><span>1.0</span></RateBox>
      </TransRow>

      <MixerRow>
        <Master>
          <MasterLeft>
            <CenterTxt>center</CenterTxt>
            <MasterKnobWrap><SmallKnob $d={18}><PanTick /></SmallKnob></MasterKnobWrap>
            <MeterPanel>
              <MeterDb>0.00dB</MeterDb>
              <MeterInf><span>-inf</span><span>-inf</span></MeterInf>
              <ScaleWrap>
                <ScaleCol $w={24} $lh={17.4}>{'12\n6\n0-\n6-\n12-\n18-\n24-\n30-\n36-\n42-'}</ScaleCol>
                <ScaleCol $w={22} $lh={35} $pt={2}>{'-6-\n-18-\n-30-\n-42-\n-54-'}</ScaleCol>
                <ScaleCol $w={23} $lh={17.4} $right>{'12\n6\n-0\n-6\n-12\n-18\n-24\n-30\n-36\n-42'}</ScaleCol>
              </ScaleWrap>
              <MTrack />
              <MasterCap />
            </MeterPanel>
          </MasterLeft>
          <MasterBtns>
            <MonoBtn>
              <svg width="14" height="10" viewBox="0 0 14 10" fill="none" stroke="#333"><circle cx="5" cy="5" r="4" /><circle cx="9" cy="5" r="4" /></svg>
            </MonoBtn>
            <BtnLabel>MONO</BtnLabel>
            <MBtn $c="#c4544c">M</MBtn>
            <MBtn $c="#c9ad4f">S</MBtn>
            <Gap $h={6} />
            <RouteIcon a="#12b89d" b="#f1d21a" c="#27475a" />
            <RouteLabel>ROUTE</RouteLabel>
            <MFxOff><MFxTop>FX</MFxTop><MFxBot><Power /></MFxBot></MFxOff>
            <Gap $h={7} />
            <GreyBtn><Env /></GreyBtn>
            <BtnLabel>TRIM</BtnLabel>
            <MBtn $c="#c9cdcf" $bold>i</MBtn>
          </MasterBtns>
        </Master>
        {strips.map((s, i) => (
          <Strip key={i}>
            <StripHead $sel={s.sel}>
              <SmallKnob $d={20}><PanTick style={{ transform: `rotate(${s.pan}deg)` }} /></SmallKnob>
            </StripHead>
            <StripBody>
              <FaderCol>
                <InfLabel>-inf</InfLabel>
                <FaderTrack />
                <FaderCap style={{ top: s.top }} />
                <BottomRow>
                  <Speaker viewBox="0 0 9 14"><path d="M9 0v14L3.500 10H0V4h3.500z" /></Speaker>
                  <RecOuter $d={20}><RecInner $d={11} /></RecOuter>
                </BottomRow>
              </FaderCol>
              <BtnCol>
                <MBtn $c="#c4544c">M</MBtn>
                <MBtn $c="#c9ad4f">S</MBtn>
                <Gap $h={5} />
                <RouteIcon a="#12b89d" b="#56553c" c="#2c4a5e" />
                <Gap $h={8} />
                <MFxOn><FxTop>FX</FxTop><FxBot><Power /></FxBot></MFxOn>
                <Gap $h={6} />
                <GreyBtn><Env /></GreyBtn>
                <Phase><PhaseIcon /></Phase>
              </BtnCol>
            </StripBody>
            <NameBox $sel={s.sel}>{s.sel ? '' : s.name}</NameBox>
          </Strip>
        ))}
      </MixerRow>
    </Page>
  );
};

export default App;
